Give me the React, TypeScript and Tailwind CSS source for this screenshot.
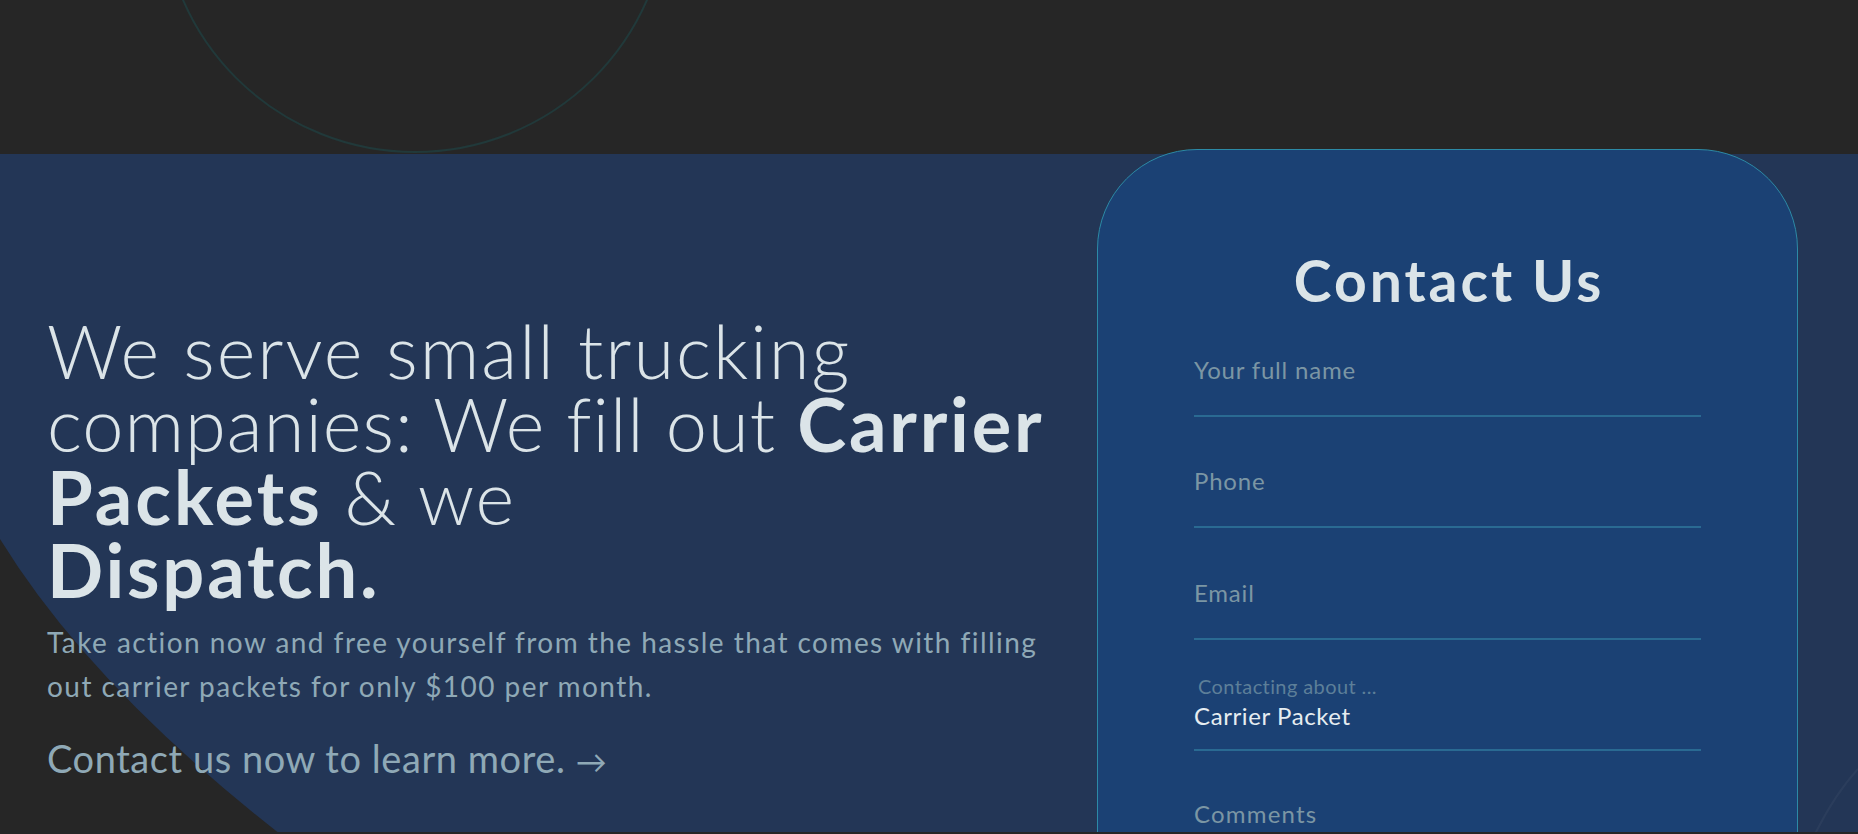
export default function App() {
  return (
    <div className="relative h-[834px] w-[1858px] overflow-hidden bg-[#262626] font-['Lato',sans-serif]">
      <div className="relative h-[154px]">
        <svg className="absolute left-0 top-0" width="1858" height="154">
          <circle cx="415" cy="-101" r="253" fill="none" stroke="#21393a" strokeWidth="2" />
        </svg>
      </div>
      <section className="relative h-[678px] bg-[#233656]">
        <svg className="absolute left-0 top-0" width="1858" height="678">
          <path d="M0 385 Q90 531.5 280 680 L0 680 Z" fill="#262626" />
          <path d="M1815 680 Q1835 640 1858 615" fill="none" stroke="rgba(255,255,255,0.04)" strokeWidth="2" />
        </svg>
        <div className="relative flex justify-between">
          <div className="pl-[47px] pt-[160px]">
            <h1 className="whitespace-nowrap text-[74px] font-light leading-[73px] text-[#dbe4e8]">
              <span className="tracking-[2px]">We serve small trucking</span>
              <br />
              <span className="tracking-[1px]">companies: We fill out </span>
              <b className="font-bold tracking-[2.8px]">Carrier</b>
              <br />
              <b className="font-bold tracking-[3px]">Packets</b>
              <span className="tracking-[1.6px]"> &amp; we</span>
              <br />
              <b className="font-bold tracking-[2.8px]">Dispatch.</b>
            </h1>
            <p className="mt-[14px] whitespace-nowrap text-[28px] leading-[44px] tracking-[1.45px] text-[#8fa9b6]">
              Take action now and free yourself from the hassle that comes with filling
              <br />
              out carrier packets for only $100 per month.
            </p>
            <a className="mt-[28px] block whitespace-nowrap text-[38px] leading-[1.2] tracking-[0.55px] text-[#8fa9b6]">
              Contact us now to learn more. <span className="text-[31px]">→</span>
            </a>
          </div>
          <div className="-mt-[5px] mr-[60px] h-[700px] w-[701px] rounded-t-[100px] border border-[#2c8aa6] bg-[#1b4174] px-[96px] pt-[96px]">
            <h2 className="pl-[3px] text-center text-[57px] font-bold leading-[1.2] tracking-[3px] text-[#dbe4e8]">
              Contact Us
            </h2>
            <form className="mt-[41px] flex flex-col">
              <div className="border-b-2 border-[#2a6a92] pb-[30px]">
                <input
                  className="h-[29px] w-full bg-transparent text-[24px] tracking-[0.8px] text-[#e6edf1] outline-none placeholder:text-[#7b96a4]"
                  placeholder="Your full name"
                />
              </div>
              <div className="mt-[50px] border-b-2 border-[#2a6a92] pb-[30px]">
                <input
                  className="h-[29px] w-full bg-transparent text-[24px] tracking-[0.8px] text-[#e6edf1] outline-none placeholder:text-[#7b96a4]"
                  placeholder="Phone"
                />
              </div>
              <div className="mt-[50px] border-b-2 border-[#2a6a92] pb-[30px]">
                <input
                  className="h-[29px] w-full bg-transparent text-[24px] tracking-[0.8px] text-[#e6edf1] outline-none placeholder:text-[#7b96a4]"
                  placeholder="Email"
                />
              </div>
              <div className="mt-[34px] border-b-2 border-[#2a6a92] pb-[18px]">
                <div className="pl-[4px] text-[20px] leading-[1.2] tracking-[0.4px] text-[#5d7f99]">Contacting about ...</div>
                <div className="mt-[4px] text-[24px] leading-[1.2] tracking-[0.6px] text-[#e6edf1]">Carrier Packet</div>
              </div>
              <div className="mt-[49px]">
                <textarea
                  className="h-[80px] w-full resize-none bg-transparent text-[24px] leading-[1.2] tracking-[1.2px] text-[#e6edf1] outline-none placeholder:text-[#7b96a4]"
                  placeholder="Comments"
                />
              </div>
            </form>
          </div>
        </div>
      </section>
      <div className="relative z-10 h-[2px] bg-[#262626]" />
    </div>
  );
}
